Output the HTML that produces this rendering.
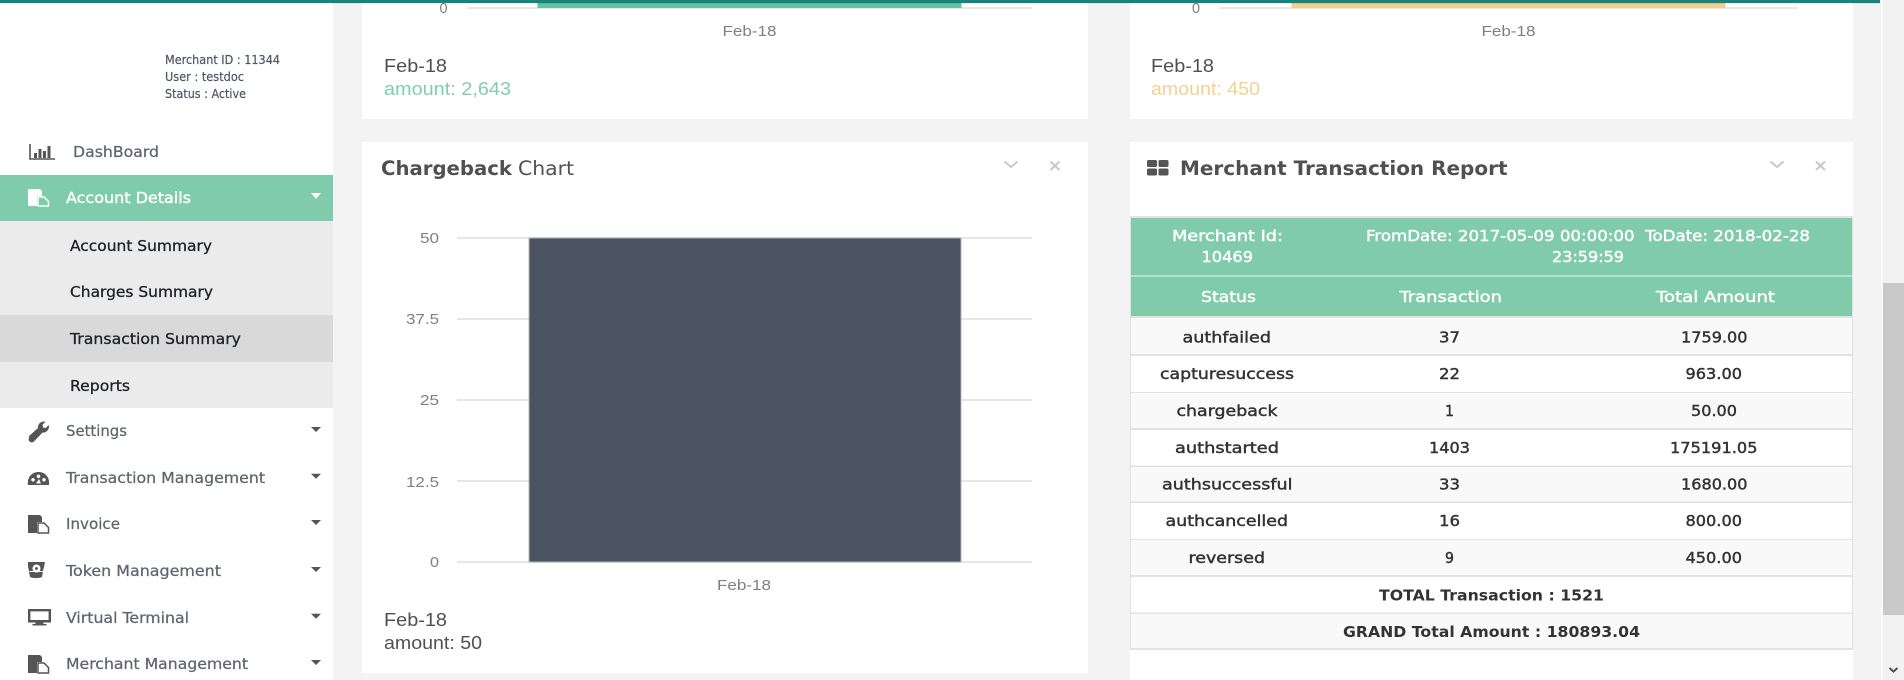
<!DOCTYPE html>
<html><head><meta charset="utf-8"><title>Dashboard</title>
<style>
html,body{margin:0;padding:0;width:1904px;height:680px;overflow:hidden;background:#f3f3f3}
svg{display:block}
text{white-space:pre}
.s{font-family:"DejaVu Sans","Liberation Sans",sans-serif}
.l{font-family:"Liberation Sans",sans-serif}
.m{font-size:12.5px;fill:#4c5664;stroke:#4c5664;stroke-width:.2}
.nav{font-size:15px;fill:#5f656f;stroke:#5f656f;stroke-width:.25}
.sub{font-size:15px;fill:#1e2228;stroke:#1e2228;stroke-width:.3}
.hd{font-size:15.5px;fill:#fff;stroke:#fff;stroke-width:.45}
.c{font-size:15.5px;fill:#333;stroke:#333;stroke-width:.45}
.t{font-size:15.5px;font-weight:bold;fill:#333}
.ax{font-size:15px;fill:#808080}
.lg{font-size:18px;fill:#505050}
.ti{font-size:19.5px;fill:#505050}
</style></head><body>
<svg width="1904" height="680" viewBox="0 0 1904 680" xmlns="http://www.w3.org/2000/svg">
<rect width="1904" height="680" fill="#f3f3f3"/>
<!-- scrollbar -->
<rect x="1881" y="0" width="2" height="680" fill="#fafafa"/>
<rect x="1883" y="0" width="21" height="680" fill="#f1f1f1"/>
<rect x="1883" y="283" width="21" height="332" fill="#c9c9c9"/>
<path d="M1889.500 668l4 3.500l4-3.500" fill="none" stroke="#505050" stroke-width="2"/>
<!-- sidebar -->
<rect x="0" y="0" width="333" height="680" fill="#fff"/>
<text class="s m" x="165" y="64" textLength="115" lengthAdjust="spacingAndGlyphs">Merchant ID : 11344</text>
<text class="s m" x="165" y="81" textLength="79" lengthAdjust="spacingAndGlyphs">User : testdoc</text>
<text class="s m" x="165" y="98" textLength="81" lengthAdjust="spacingAndGlyphs">Status : Active</text>
<!-- dashboard -->
<path d="M30 144v15h25" fill="none" stroke="#555" stroke-width="1.600"/>
<path d="M34 153h3v5h-3zM38.500 149h3v9h-3zM43 151h3v7h-3zM47.500 146h3v12h-3z" fill="#555"/>
<text class="s nav" x="73" y="157" textLength="86" lengthAdjust="spacingAndGlyphs">DashBoard</text>
<rect x="0" y="175" width="333" height="46" fill="#7fcbab"/>
<path d="M28 189h12l2 2v5h-5v10h-9z" fill="#fff"/>
<path d="M38 197h6l4.500 4.500v4.500h-10.500z" fill="none" stroke="#fff" stroke-width="1.500"/>
<text class="s" x="66" y="203" font-size="15px" fill="#fff" stroke="#fff" stroke-width=".4" textLength="125" lengthAdjust="spacingAndGlyphs">Account Details</text>
<path d="M311 193h10l-5 6z" fill="#fff"/>
<rect x="0" y="221" width="333" height="187" fill="#ebebeb"/>
<rect x="0" y="315" width="333" height="47" fill="#d9d9d9"/>
<text class="s sub" x="70" y="251" textLength="142" lengthAdjust="spacingAndGlyphs">Account Summary</text>
<text class="s sub" x="70" y="297" textLength="143" lengthAdjust="spacingAndGlyphs">Charges Summary</text>
<text class="s sub" x="70" y="344" textLength="171" lengthAdjust="spacingAndGlyphs">Transaction Summary</text>
<text class="s sub" x="70" y="391" textLength="60" lengthAdjust="spacingAndGlyphs">Reports</text>
<text class="s nav" x="66" y="436" textLength="61" lengthAdjust="spacingAndGlyphs">Settings</text>
<text class="s nav" x="66" y="483" textLength="199" lengthAdjust="spacingAndGlyphs">Transaction Management</text>
<text class="s nav" x="66" y="529" textLength="54" lengthAdjust="spacingAndGlyphs">Invoice</text>
<text class="s nav" x="66" y="576" textLength="155" lengthAdjust="spacingAndGlyphs">Token Management</text>
<text class="s nav" x="66" y="623" textLength="123" lengthAdjust="spacingAndGlyphs">Virtual Terminal</text>
<text class="s nav" x="66" y="669" textLength="182" lengthAdjust="spacingAndGlyphs">Merchant Management</text>
<g fill="#555">
<path d="M311 427h10l-5 5zM311 473.700h10l-5 5zM311 520h10l-5 5zM311 567h10l-5 5zM311 613.700h10l-5 5zM311 660h10l-5 5z"/>
<!-- wrench -->
<path d="M28.500 436.500l9.500-8.500c-.5-3 2-6.500 6-6.500l1.500.3-3 3 .5 2.700 2.700.5 3-3 .3 1.500c0 4-3.500 6.500-6.500 6l-8.500 9c-1.500 1.200-3 1.200-4.500 0-1.300-1.500-1.300-3 0-4.500z"/>
<!-- gauge -->
<path fill-rule="evenodd" d="M28 485c-1-8 4-13 10.500-13s11.500 5 10.500 13zM33 478a1.800 1.800 0 1 0 .01 0zM38.500 474.500a1.800 1.800 0 1 0 .01 0zM44 478a1.800 1.800 0 1 0 .01 0zM39 479l-3 4.500h5z"/>
<!-- invoice -->
<path d="M28 515h12l2 2v5h-5v11h-9z"/>
<path d="M38 523h6l4.500 4.500v5.500h-10.500z" fill="#fff" stroke="#555" stroke-width="1.500"/>
<!-- token -->
<path fill-rule="evenodd" d="M28 562h17l-1 5c-.5 2-1 3-1 4.500l-1 5.500c-3 1.500-9 1.500-12 0l-1-5.500c0-1.500-.5-2.500-1-4.500zM36.500 564.500a4 4 0 1 0 .01 0zM36.500 567a1.500 1.500 0 1 1-.01 0z"/>
<path d="M29.500 571.500h14" stroke="#fff" stroke-width="1"/>
<!-- monitor -->
<path d="M29.200 610.200h20.600v11h-20.600z" fill="none" stroke="#555" stroke-width="2.400"/>
<path d="M28 620h23v2.500h-23zM35.500 622h8v2h3v1.500h-14v-1.500h3z"/>
<!-- merchant -->
<path d="M28 655h12l2 2v5h-5v11h-9z"/>
<path d="M38 663h6l4.500 4.500v5.500h-10.500z" fill="#fff" stroke="#555" stroke-width="1.500"/>
</g>
<!-- cards -->
<rect x="362" y="0" width="726" height="119" fill="#fff"/>
<rect x="1130" y="0" width="723" height="119" fill="#fff"/>
<rect x="362" y="142" width="726" height="531" fill="#fff"/>
<rect x="1130" y="142" width="723" height="538" fill="#fff"/>
<!-- top left chart -->
<rect x="467" y="7" width="565" height="2" fill="#e8e8e8"/>
<rect x="537.500" y="0" width="424" height="8" fill="#66c2a0"/>
<text class="l ax" x="439.500" y="13" textLength="8" lengthAdjust="spacingAndGlyphs">0</text>
<text class="l ax" x="722.500" y="36" textLength="54" lengthAdjust="spacingAndGlyphs">Feb-18</text>
<text class="l lg" x="384" y="72" textLength="63" lengthAdjust="spacingAndGlyphs">Feb-18</text>
<text class="l lg" x="384" y="95" style="fill:#7fcfae" textLength="127" lengthAdjust="spacingAndGlyphs">amount: 2,643</text>
<!-- top right chart -->
<rect x="1219" y="7" width="579" height="2" fill="#e8e8e8"/>
<rect x="1291.500" y="0" width="434" height="8" fill="#f0ce8c"/>
<text class="l ax" x="1192" y="13" textLength="8" lengthAdjust="spacingAndGlyphs">0</text>
<text class="l ax" x="1481.500" y="36" textLength="54" lengthAdjust="spacingAndGlyphs">Feb-18</text>
<text class="l lg" x="1151" y="72" textLength="63" lengthAdjust="spacingAndGlyphs">Feb-18</text>
<text class="l lg" x="1151" y="95" style="fill:#f3d191" textLength="109" lengthAdjust="spacingAndGlyphs">amount: 450</text>
<!-- top teal bar -->
<rect x="0" y="3" width="1880" height="1" fill="#000" opacity=".07"/>
<rect x="0" y="0" width="1880" height="3" fill="#17837f"/>
<!-- chargeback chart -->
<text class="s ti" x="381" y="175" font-weight="bold" textLength="131" lengthAdjust="spacingAndGlyphs">Chargeback</text>
<text class="s ti" x="518" y="175" textLength="56" lengthAdjust="spacingAndGlyphs">Chart</text>
<path d="M1004.500 161.500l6.500 5.500l6.500-5.500" fill="none" stroke="#c8c8c8" stroke-width="2"/>
<path d="M1050.500 161.500l9 8.500M1059.500 161.500l-9 8.500" fill="none" stroke="#c8c8c8" stroke-width="2"/>
<g fill="#e6e6e6">
<rect x="457" y="237" width="575" height="2"/><rect x="457" y="318" width="575" height="2"/><rect x="457" y="399" width="575" height="2"/><rect x="457" y="480" width="575" height="2"/><rect x="457" y="561" width="575" height="2"/>
</g>
<rect x="529" y="238" width="432" height="324" fill="#4b5260" stroke="#b4b7bd" stroke-width="1"/>
<text class="l ax" x="420" y="243" textLength="19" lengthAdjust="spacingAndGlyphs">50</text>
<text class="l ax" x="406" y="324" textLength="33" lengthAdjust="spacingAndGlyphs">37.5</text>
<text class="l ax" x="420" y="405" textLength="19" lengthAdjust="spacingAndGlyphs">25</text>
<text class="l ax" x="406" y="487" textLength="33" lengthAdjust="spacingAndGlyphs">12.5</text>
<text class="l ax" x="430" y="567" textLength="9" lengthAdjust="spacingAndGlyphs">0</text>
<text class="l ax" x="717" y="590" textLength="54" lengthAdjust="spacingAndGlyphs">Feb-18</text>
<text class="l lg" x="384" y="626" textLength="63" lengthAdjust="spacingAndGlyphs">Feb-18</text>
<text class="l lg" x="384" y="649" textLength="98" lengthAdjust="spacingAndGlyphs">amount: 50</text>
<!-- merchant report -->
<g fill="#555"><rect x="1147" y="160" width="10" height="7" rx="1.500"/><rect x="1158.500" y="160" width="10" height="7" rx="1.500"/><rect x="1147" y="168.500" width="10" height="7" rx="1.500"/><rect x="1158.500" y="168.500" width="10" height="7" rx="1.500"/></g>
<text class="s ti" x="1180" y="175" font-weight="bold" textLength="327.500" lengthAdjust="spacingAndGlyphs">Merchant Transaction Report</text>
<path d="M1770.500 161.500l6.500 5.500l6.500-5.500" fill="none" stroke="#c8c8c8" stroke-width="2"/>
<path d="M1816 161.500l9 8.500M1825 161.500l-9 8.500" fill="none" stroke="#c8c8c8" stroke-width="2"/>
<!-- table -->
<rect x="1130" y="216" width="723" height="434" fill="#e2e2e2"/>
<rect x="1131" y="218" width="721" height="57" fill="#7fcbab"/>
<rect x="1131" y="275" width="721" height="2" fill="#b4e0ce"/>
<rect x="1131" y="277" width="721" height="39" fill="#7fcbab"/>
<rect x="1131" y="318" width="721" height="36" fill="#f9f9f9"/>
<rect x="1131" y="356" width="721" height="36" fill="#fff"/>
<rect x="1131" y="393" width="721" height="35" fill="#f9f9f9"/>
<rect x="1131" y="430" width="721" height="35.500" fill="#fff"/>
<rect x="1131" y="467" width="721" height="34.500" fill="#f9f9f9"/>
<rect x="1131" y="503" width="721" height="36" fill="#fff"/>
<rect x="1131" y="540" width="721" height="35" fill="#f9f9f9"/>
<rect x="1131" y="577" width="721" height="35.500" fill="#fff"/>
<rect x="1131" y="614" width="721" height="34" fill="#f9f9f9"/>
<text class="s hd" x="1172" y="241" textLength="111" lengthAdjust="spacingAndGlyphs">Merchant Id:</text>
<text class="s hd" x="1201.500" y="262" textLength="51.500" lengthAdjust="spacingAndGlyphs">10469</text>
<text class="s hd" x="1366" y="241" textLength="444" lengthAdjust="spacingAndGlyphs">FromDate: 2017-05-09 00:00:00  ToDate: 2018-02-28</text>
<text class="s hd" x="1552" y="262" textLength="72" lengthAdjust="spacingAndGlyphs">23:59:59</text>
<text class="s hd" x="1201" y="302" textLength="55" lengthAdjust="spacingAndGlyphs">Status</text>
<text class="s hd" x="1399.500" y="302" textLength="102.500" lengthAdjust="spacingAndGlyphs">Transaction</text>
<text class="s hd" x="1656" y="302" textLength="119" lengthAdjust="spacingAndGlyphs">Total Amount</text>
<text class="s c" x="1182.500" y="342.500" textLength="88.500" lengthAdjust="spacingAndGlyphs">authfailed</text>
<text class="s c" x="1439" y="342.500" textLength="21" lengthAdjust="spacingAndGlyphs">37</text>
<text class="s c" x="1681" y="342.500" textLength="66.500" lengthAdjust="spacingAndGlyphs">1759.00</text>
<text class="s c" x="1160" y="379" textLength="134" lengthAdjust="spacingAndGlyphs">capturesuccess</text>
<text class="s c" x="1439" y="379" textLength="21" lengthAdjust="spacingAndGlyphs">22</text>
<text class="s c" x="1685.500" y="379" textLength="56.500" lengthAdjust="spacingAndGlyphs">963.00</text>
<text class="s c" x="1176.500" y="416" textLength="101" lengthAdjust="spacingAndGlyphs">chargeback</text>
<text class="s c" x="1445" y="416" textLength="9" lengthAdjust="spacingAndGlyphs">1</text>
<text class="s c" x="1691" y="416" textLength="46" lengthAdjust="spacingAndGlyphs">50.00</text>
<text class="s c" x="1175" y="453" textLength="104" lengthAdjust="spacingAndGlyphs">authstarted</text>
<text class="s c" x="1429" y="453" textLength="41" lengthAdjust="spacingAndGlyphs">1403</text>
<text class="s c" x="1670" y="453" textLength="87.500" lengthAdjust="spacingAndGlyphs">175191.05</text>
<text class="s c" x="1162" y="489.500" textLength="130.500" lengthAdjust="spacingAndGlyphs">authsuccessful</text>
<text class="s c" x="1439" y="489.500" textLength="21" lengthAdjust="spacingAndGlyphs">33</text>
<text class="s c" x="1681" y="489.500" textLength="66.500" lengthAdjust="spacingAndGlyphs">1680.00</text>
<text class="s c" x="1165.500" y="526" textLength="122.500" lengthAdjust="spacingAndGlyphs">authcancelled</text>
<text class="s c" x="1439" y="526" textLength="21" lengthAdjust="spacingAndGlyphs">16</text>
<text class="s c" x="1685.500" y="526" textLength="56.500" lengthAdjust="spacingAndGlyphs">800.00</text>
<text class="s c" x="1188.500" y="563" textLength="76.500" lengthAdjust="spacingAndGlyphs">reversed</text>
<text class="s c" x="1445" y="563" textLength="9" lengthAdjust="spacingAndGlyphs">9</text>
<text class="s c" x="1685.500" y="563" textLength="56.500" lengthAdjust="spacingAndGlyphs">450.00</text>
<text class="s t" x="1379" y="600.500" textLength="225" lengthAdjust="spacingAndGlyphs">TOTAL Transaction : 1521</text>
<text class="s t" x="1343" y="637" textLength="297" lengthAdjust="spacingAndGlyphs">GRAND Total Amount : 180893.04</text>
</svg>
</body></html>
